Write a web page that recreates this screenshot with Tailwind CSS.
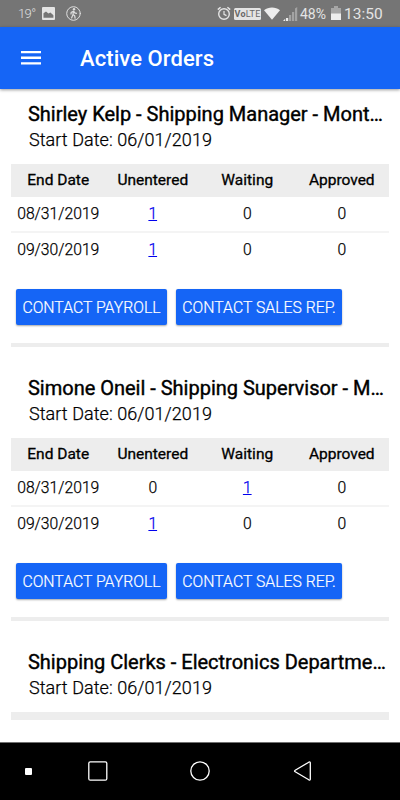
<!DOCTYPE html>
<html lang="en">
<head>
<meta charset="utf-8">
<meta name="viewport" content="width=device-width, initial-scale=1">
<title>Active Orders</title>
<script src="https://cdn.jsdelivr.net/npm/@tailwindcss/browser@4"></script>
</head>
<body class="bg-white">
<div class="w-[400px] h-[800px] overflow-hidden flex flex-col bg-white text-black font-[Roboto,sans-serif]">
  <!-- Status bar -->
  <div class="h-[27px] shrink-0 bg-[#757575] flex items-center text-[#e4e4e4]">
    <span class="ml-[18px] w-[24px] text-[13px] leading-[27px] font-light tracking-[-0.600px] text-[#e0e0e0]">19°</span>
    <svg class="w-[13px] h-[13px]" viewBox="0 0 13 13"><rect width="13" height="13" rx="1" fill="#e4e4e4"/><path d="M1.500 10.800V6.200L4 4.500l2.400 2 2-.9 3 2.600v2.600z" fill="#757575"/></svg>
    <svg class="ml-[11px] w-[15px] h-[15px]" viewBox="0 0 15 15" fill="none" stroke="#dedede" stroke-linecap="round"><circle cx="7.500" cy="7.500" r="6.800" stroke-width="1"/><circle cx="8" cy="3.300" r="1.200" fill="#dedede" stroke="none"/><path d="M7.500 5.200L7 8.400l1.700 1.500.4 2.300M7 8.600L5.600 12M7.300 5.300L5.200 6.400 5 8M7.800 5.400l1 1.500 1.700.5" stroke-width="1.200"/></svg>
    <svg class="ml-[136px] w-[14px] h-[15px] shrink-0" viewBox="0 0 14 15" fill="none" stroke="#e4e4e4"><circle cx="7" cy="8" r="5.300" stroke-width="1.400"/><path d="M7 5v3.300l2.500 1.300" stroke-width="1.200"/><path d="M.8 3.600L3.600 1.200M13.200 3.600L10.400 1.200" stroke-width="1.500"/></svg>
    <span class="ml-[3px] w-[27px] shrink-0 h-[12px] rounded-[1.500px] bg-[#e4e4e4] text-[#686868] text-[9px] leading-[12px] text-center tracking-[0.200px]"><b>Vo</b>LTE</span>
    <svg class="ml-[3px] w-[16px] h-[13px] shrink-0" viewBox="0 0 16 13"><path d="M0 3.200C4.500-.4 11.500-.4 16 3.200L8 12.800z" fill="#ededed"/></svg>
    <svg class="ml-[3px] w-[15px] h-[14px] shrink-0" viewBox="0 0 15 14"><path d="M0 14l2.200-2.200V14zM3 11h2.200v3H3z" fill="#ededed"/><path d="M6 8h2.200v6H6zM9 5h2.200v9H9zM12 1.500L14.200 0v14H12z" fill="#a3a3a3"/></svg>
    <span class="ml-[2px] w-[31px] shrink-0 text-[14px] leading-[28px] whitespace-nowrap">48%</span>
    <svg class="w-[10px] h-[15px] shrink-0" viewBox="0 0 10 15"><path d="M0 2h3V0h4v2h3v6H0z" fill="#a6a6a6"/><path d="M0 7.500h10V14H0z" fill="#ededed"/></svg>
    <span class="ml-[3px] text-[15.500px] leading-[28px] whitespace-nowrap">13:50</span>
  </div>

  <!-- App bar -->
  <header class="relative h-[62px] shrink-0 bg-[#1565f6] flex items-center shadow-[0_1px_3px_rgba(0,0,0,0.4)]">
    <svg class="ml-[21px] w-[20px] h-[14px]" viewBox="0 0 20 14" fill="#fff"><path d="M0 0h20v2.300H0zM0 5.600h20v2.300H0zM0 11.200h20v2.300H0z"/></svg>
    <h1 class="ml-[39px] pt-[2px] text-[22px] leading-[30px] font-medium tracking-[0.080px] text-white whitespace-nowrap">Active Orders</h1>
  </header>

  <main class="flex-1 px-[11px] bg-white">
    <section class="h-[258px] border-b-[4px] border-[#ededed] pt-[12px]">
      <h2 class="pl-[17px] h-[26px] text-[20px] leading-[26px] tracking-[-0.010px] whitespace-nowrap [-webkit-text-stroke:0.400px_#000]">Shirley Kelp - Shipping Manager - Mont…</h2>
      <p class="pl-[18px] h-[25px] text-[18px] leading-[26px] font-light tracking-[0.060px] [-webkit-text-stroke:0.250px_#000] whitespace-nowrap">Start Date: 06/01/2019</p>
      <div class="mt-[12px] h-[33px] grid grid-cols-4 items-center bg-[#ededed] text-center text-[15.500px] leading-[33px] [-webkit-text-stroke:0.300px_#000]"><span>End Date</span><span>Unentered</span><span>Waiting</span><span>Approved</span></div>
      <div class="h-[36px] border-b-2 border-[#f4f4f4] pb-[1px] grid grid-cols-4 items-center text-center text-[15.700px] font-light [-webkit-text-stroke:0.250px]"><span>08/31/2019</span><a class="text-[#0000ee] underline">1</a><span>0</span><span>0</span></div>
      <div class="h-[34px] grid grid-cols-4 items-center text-center text-[15.700px] font-light [-webkit-text-stroke:0.250px]"><span>09/30/2019</span><a class="text-[#0000ee] underline">1</a><span>0</span><span>0</span></div>
      <div class="mt-[22px] ml-[5px] flex gap-[9px] text-white text-[15.800px] leading-[38px] font-light [-webkit-text-stroke:0.200px]">
        <button class="w-[151px] h-[36px] rounded-[2px] bg-[#1565f6] whitespace-nowrap shadow-[0_1px_2px_rgba(0,0,0,0.350)]">CONTACT PAYROLL</button>
        <button class="w-[166px] h-[36px] rounded-[2px] bg-[#1565f6] whitespace-nowrap shadow-[0_1px_2px_rgba(0,0,0,0.350)]">CONTACT SALES REP.</button>
      </div>
    </section>
    <section class="h-[274px] border-b-[4px] border-[#ededed] pt-[28px]">
      <h2 class="pl-[17px] h-[26px] text-[20px] leading-[26px] tracking-[-0.010px] whitespace-nowrap [-webkit-text-stroke:0.400px_#000]">Simone Oneil - Shipping Supervisor - M…</h2>
      <p class="pl-[18px] h-[25px] text-[18px] leading-[26px] font-light tracking-[0.060px] [-webkit-text-stroke:0.250px_#000] whitespace-nowrap">Start Date: 06/01/2019</p>
      <div class="mt-[12px] h-[33px] grid grid-cols-4 items-center bg-[#ededed] text-center text-[15.500px] leading-[33px] [-webkit-text-stroke:0.300px_#000]"><span>End Date</span><span>Unentered</span><span>Waiting</span><span>Approved</span></div>
      <div class="h-[36px] border-b-2 border-[#f4f4f4] pb-[1px] grid grid-cols-4 items-center text-center text-[15.700px] font-light [-webkit-text-stroke:0.250px]"><span>08/31/2019</span><span>0</span><a class="text-[#0000ee] underline">1</a><span>0</span></div>
      <div class="h-[34px] grid grid-cols-4 items-center text-center text-[15.700px] font-light [-webkit-text-stroke:0.250px]"><span>09/30/2019</span><a class="text-[#0000ee] underline">1</a><span>0</span><span>0</span></div>
      <div class="mt-[22px] ml-[5px] flex gap-[9px] text-white text-[15.800px] leading-[38px] font-light [-webkit-text-stroke:0.200px]">
        <button class="w-[151px] h-[36px] rounded-[2px] bg-[#1565f6] whitespace-nowrap shadow-[0_1px_2px_rgba(0,0,0,0.350)]">CONTACT PAYROLL</button>
        <button class="w-[166px] h-[36px] rounded-[2px] bg-[#1565f6] whitespace-nowrap shadow-[0_1px_2px_rgba(0,0,0,0.350)]">CONTACT SALES REP.</button>
      </div>
    </section>
    <section class="h-[99px] border-b-[8px] border-[#ededed] pt-[28px]">
      <h2 class="pl-[17px] h-[26px] text-[20px] leading-[26px] tracking-[-0.010px] whitespace-nowrap [-webkit-text-stroke:0.400px_#000]">Shipping Clerks - Electronics Departme…</h2>
      <p class="pl-[18px] h-[25px] text-[18px] leading-[26px] font-light tracking-[0.060px] [-webkit-text-stroke:0.250px_#000] whitespace-nowrap">Start Date: 06/01/2019</p>
    </section>
  </main>

  <!-- Navigation bar -->
  <nav class="h-[58px] shrink-0 bg-black border-t border-[#707070] flex items-center pb-[1px]">
    <span class="ml-[25px] w-[7px] h-[7px] rounded-[1px] bg-white"></span>
    <svg class="ml-[56px] w-[20px] h-[20px]" viewBox="0 0 20 20" fill="none" stroke="#fff" stroke-width="1.300"><rect x=".8" y=".8" width="18" height="18.400" rx="1.500"/></svg>
    <svg class="ml-[82px] w-[20px] h-[20px]" viewBox="0 0 20 20" fill="none" stroke="#fff" stroke-width="1.300"><circle cx="10" cy="10" r="9.200"/></svg>
    <svg class="ml-[83px] w-[20px] h-[20px]" viewBox="0 0 20 20" fill="none" stroke="#fff" stroke-width="1.300" stroke-linejoin="round"><path d="M2.200 9.200L15.800 1.200Q17.300.5 17.300 2v16q0 1.500-1.500.8L2.200 10.800Q.8 10 2.200 9.200z"/></svg>
  </nav>
</div>
</body>
</html>
